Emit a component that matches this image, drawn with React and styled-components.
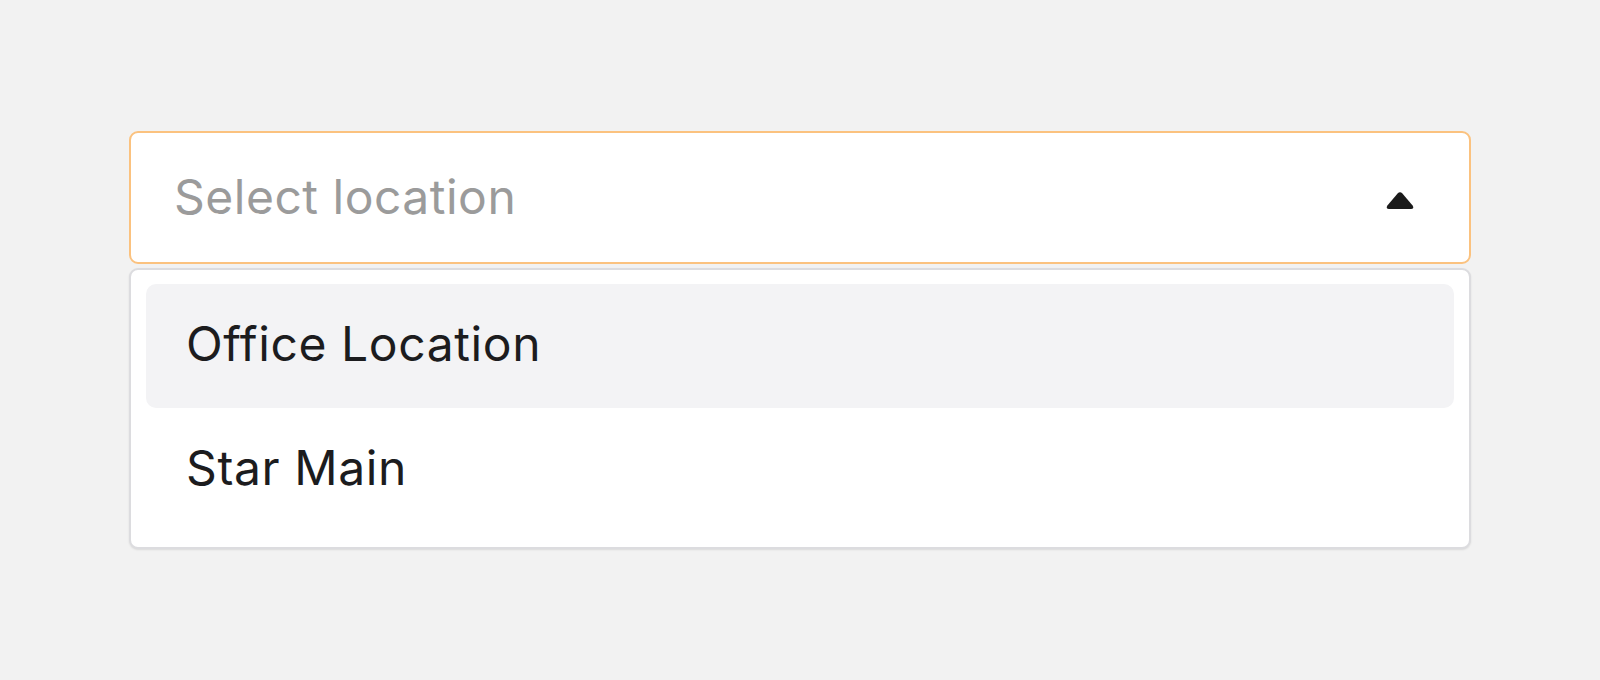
import React from 'react'
import styled, { createGlobalStyle } from 'styled-components'

const GlobalStyle = createGlobalStyle`
  body {
    margin: 0;
    background: #f2f2f2;
    font-family: Inter, "Noto Sans", sans-serif;
  }
`

const Page = styled.div`
  padding: 131px 129px;
`

const Trigger = styled.div`
  box-sizing: border-box;
  height: 133px;
  display: flex;
  align-items: center;
  justify-content: space-between;
  padding: 0 54px 2px 43px;
  background: #fff;
  border: 2px solid #fbc27f;
  border-radius: 9px;
`

const Placeholder = styled.span`
  font-size: 48px;
  color: #9b9b9b;
  letter-spacing: 0.5px;
`

const Caret = styled.svg`
  width: 30px;
  height: 20px;
  margin-top: 8px;
`

const Menu = styled.div`
  box-sizing: border-box;
  margin-top: 4px;
  padding: 14px 15px 15px;
  background: #fff;
  border: 2px solid #dcdcdf;
  border-radius: 9px;
  box-shadow: 0 1px 2px rgba(0, 0, 0, 0.1);
`

const Option = styled.div`
  box-sizing: border-box;
  height: 124px;
  display: flex;
  align-items: center;
  padding: 0 0 6px 40px;
  border-radius: 10px;
  font-size: 48px;
  color: #1c1c1e;
  letter-spacing: 0.6px;
  background: ${p => (p.$active ? '#f3f3f5' : 'transparent')};
`

const options = ['Office Location', 'Star Main']

export default function App() {
  return (
    <Page>
      <GlobalStyle />
      <Trigger>
        <Placeholder>Select location</Placeholder>
        <Caret viewBox="0 0 30 20">
          <path
            d="M12.6 2.6 Q15 0 17.4 2.6 L27.6 14.6 Q29.6 18 26 18 L4 18 Q0.4 18 2.4 14.6 Z"
            fill="#1a1a1a"
          />
        </Caret>
      </Trigger>
      <Menu>
        {options.map((o, i) => (
          <Option key={o} $active={i === 0}>{o}</Option>
        ))}
      </Menu>
    </Page>
  )
}
